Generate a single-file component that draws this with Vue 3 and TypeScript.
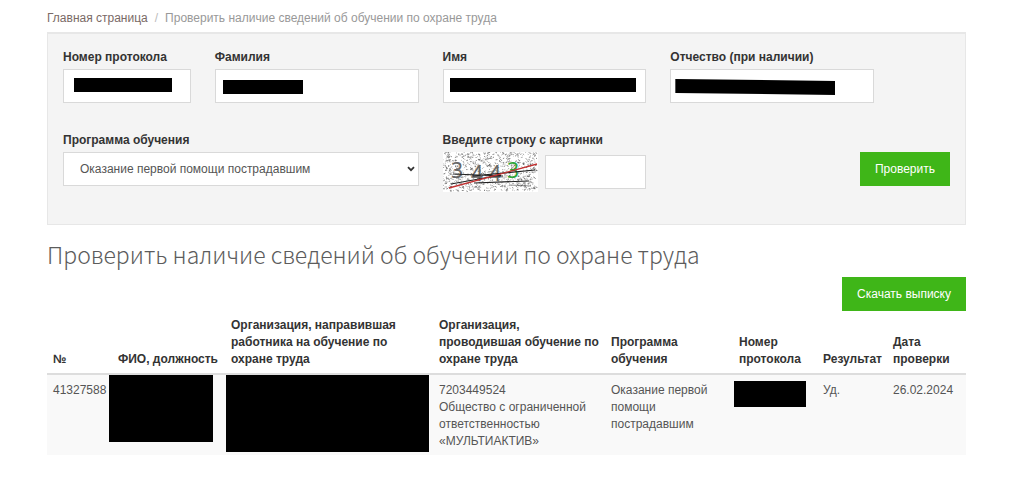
<script setup lang="ts">
import { ref } from 'vue'

const title = 'Проверить наличие сведений об обучении по охране труда'

interface Field {
  id: string
  label: string
  span: string
  mask: string
}

const fields: Field[] = [
  { id: 'protocol', label: 'Номер протокола', span: 'span-2', mask: 'mask-protocol' },
  { id: 'surname', label: 'Фамилия', span: 'span-3', mask: 'mask-surname' },
  { id: 'name', label: 'Имя', span: 'span-3', mask: 'mask-name' },
  { id: 'patronymic', label: 'Отчество (при наличии)', span: 'span-3', mask: 'mask-patronymic' },
]

const program = ref('first-aid')
const captcha = ref('')

// Speckles of the captcha background, from a small seeded generator
function makeNoise(count: number, seed: number): string {
  let s = seed
  const next = (): number => {
    s = (s * 1103515245 + 12345) % 2147483648
    return s / 2147483648
  }
  let d = ''
  for (let i = 0; i < count; i++) {
    const x = (next() * 93).toFixed(1)
    const y = (next() * 39).toFixed(1)
    const dx = (next() * 3 - 1).toFixed(1)
    const dy = (next() * 2 - 1).toFixed(1)
    d += `M${x} ${y}l${dx} ${dy}`
  }
  return d
}
const noise = makeNoise(900, 7919)
</script>

<template>
  <main class="page">
    <nav class="crumbs" aria-label="Навигация">
      <a href="#">Главная страница</a>
      <span class="slash">/</span>
      <span>{{ title }}</span>
    </nav>

    <form class="panel" @submit.prevent>
      <div v-for="f in fields" :key="f.id" :class="['field', f.span]">
        <label :for="f.id">{{ f.label }}</label>
        <div class="control">
          <input :id="f.id" type="text" class="box" />
          <span :class="['mask', f.mask]"></span>
        </div>
      </div>

      <div class="field program">
        <label for="program">Программа обучения</label>
        <div class="control">
          <select id="program" v-model="program" class="box">
            <option value="first-aid">Оказание первой помощи пострадавшим</option>
          </select>
          <svg class="chevron" viewBox="0 0 8 6" aria-hidden="true">
            <path d="M1 1.2 4 4.2 7 1.2" fill="none" stroke="#333" stroke-width="1.8" />
          </svg>
        </div>
      </div>

      <div class="field span-3">
        <label for="captcha">Введите строку с картинки</label>
        <div class="captcha">
          <svg class="captcha-image" viewBox="0 0 95 40" role="img" aria-label="Картинка со строкой">
            <rect width="95" height="40" fill="#fff" />
            <path :d="noise" stroke="#555" stroke-width="0.9" fill="none" opacity="0.75" />
            <g class="digits" fill="#666">
              <text x="8" y="26">3</text>
              <text x="28" y="29">4</text>
              <text x="46" y="29">4</text>
              <text x="64" y="26" fill="#2fa53a">3</text>
            </g>
            <g fill="none" stroke="#222">
              <path d="M10 22 60 24M30 24 92 18M8 32 58 23M31 31 86 29" stroke-width="1.2" />
              <path d="M66 33 88 34M82 30V36" stroke-width="1" opacity="0.5" />
            </g>
            <path d="M6 36 94 12" fill="none" stroke="#c23030" stroke-width="1.3" />
          </svg>
          <input id="captcha" v-model="captcha" type="text" class="box" />
        </div>
      </div>

      <div class="submit">
        <button type="submit" class="btn">Проверить</button>
      </div>
    </form>

    <h1>{{ title }}</h1>

    <div class="actions">
      <button type="button" class="btn">Скачать выписку</button>
    </div>

    <table>
      <colgroup>
        <col class="c-id" />
        <col class="c-person" />
        <col class="c-sender" />
        <col class="c-trainer" />
        <col class="c-program" />
        <col class="c-protocol" />
        <col class="c-result" />
        <col class="c-date" />
      </colgroup>
      <thead>
        <tr>
          <th>№</th>
          <th>ФИО, должность</th>
          <th>Организация, направившая работника на обучение по охране труда</th>
          <th>Организация, проводившая обучение по охране труда</th>
          <th>Программа обучения</th>
          <th>Номер протокола</th>
          <th>Результат</th>
          <th>Дата проверки</th>
        </tr>
      </thead>
      <tbody>
        <tr>
          <td>41327588</td>
          <td><span class="mask mask-person"></span></td>
          <td><span class="mask mask-sender"></span></td>
          <td>7203449524<br />Общество с ограниченной ответственностью «МУЛЬТИАКТИВ»</td>
          <td>Оказание первой помощи пострадавшим</td>
          <td><span class="mask mask-number"></span></td>
          <td>Уд.</td>
          <td>26.02.2024</td>
        </tr>
      </tbody>
    </table>
  </main>
</template>

<style>
body {
  margin: 0;
  background: #fff;
}
</style>

<style scoped>
.page {
  box-sizing: border-box;
  padding: 9px 64px 24px 47px;
  font-family: 'Liberation Sans', Arial, sans-serif;
  font-size: 12px;
  line-height: 17px;
  color: #555;
}

.crumbs {
  display: flex;
  gap: 7px;
  height: 23px;
  line-height: 18px;
  color: #999;
}

.crumbs a {
  color: #7a6a66;
  text-decoration: none;
}

.slash {
  color: #bbb;
}

.panel {
  display: grid;
  grid-template-columns: repeat(12, minmax(0, 1fr));
  column-gap: 24px;
  row-gap: 28px;
  padding: 14px 15px 32px;
  background: #f4f4f4;
  border: 1px solid #e7e7e7;
  border-top-width: 2px;
}

.span-2 {
  grid-column: span 2;
}

.span-3 {
  grid-column: span 3;
}

.program {
  grid-column: 1 / span 5;
}

label {
  display: block;
  margin-bottom: 3px;
  font-weight: 700;
  line-height: 18px;
  color: #333;
  white-space: nowrap;
}

.control {
  position: relative;
}

.box {
  display: block;
  box-sizing: border-box;
  width: 100%;
  height: 34px;
  margin: 0;
  padding: 0 16px;
  border: 1px solid #d9d9d9;
  border-radius: 0;
  background: #fff;
  color: #555;
  font: inherit;
  appearance: none;
}

.chevron {
  position: absolute;
  top: 14px;
  right: 4px;
  width: 8px;
  height: 6px;
  pointer-events: none;
}

.captcha {
  display: flex;
  align-items: center;
  gap: 7px;
}

.captcha-image {
  flex: none;
  width: 95px;
  height: 40px;
}

.digits {
  font-family: 'Noto Sans', sans-serif;
  font-size: 21px;
}

.captcha .box {
  flex: 1;
  min-width: 0;
}

.submit {
  grid-column: span 4;
  display: flex;
  justify-content: flex-end;
  align-items: flex-start;
  padding-top: 21px;
}

.btn {
  height: 34px;
  padding: 0 15px;
  border: 0;
  background: #3fb618;
  color: #fff;
  font: inherit;
  white-space: nowrap;
}

h1 {
  margin: 13px 0 0;
  font-family: 'Noto Sans CJK SC', 'Open Sans', sans-serif;
  font-size: 23px;
  font-weight: 300;
  line-height: 32px;
  color: #5c5c5c;
}

.actions {
  display: flex;
  justify-content: flex-end;
  margin-top: 7px;
}

table {
  width: 100%;
  table-layout: fixed;
  border-collapse: separate;
  border-spacing: 0;
}

.c-id {
  width: 65px;
}

.c-person {
  width: 113px;
}

.c-sender {
  width: 208px;
}

.c-trainer {
  width: 172px;
}

.c-program {
  width: 128px;
}

.c-protocol {
  width: 84px;
}

.c-result {
  width: 70px;
}

.c-date {
  width: 79px;
}

th {
  padding: 6px 5px 5px 6px;
  border-bottom: 2px solid #ddd;
  color: #333;
  font-weight: 700;
  text-align: left;
  vertical-align: bottom;
}

td {
  position: relative;
  padding: 7px 6px 5px;
  background: #f9f9f9;
  vertical-align: top;
}

.mask {
  position: absolute;
  background: #000;
}

.mask-protocol {
  top: 9px;
  left: 11px;
  width: 98px;
  height: 14px;
}

.mask-surname {
  top: 11px;
  left: 8px;
  width: 80px;
  height: 14px;
}

.mask-name {
  top: 9px;
  left: 7px;
  width: 186px;
  height: 14px;
}

.mask-patronymic {
  top: 10px;
  left: 5px;
  width: 160px;
  height: 16px;
  clip-path: polygon(0 0, 100% 2px, 100% 100%, 0 14px);
}

.mask-person {
  top: 0;
  left: -3px;
  width: 104px;
  height: 67px;
}

.mask-sender {
  top: 0;
  left: 1px;
  width: 203px;
  height: 77px;
}

.mask-number {
  top: 6px;
  left: 1px;
  width: 72px;
  height: 26px;
}
</style>
